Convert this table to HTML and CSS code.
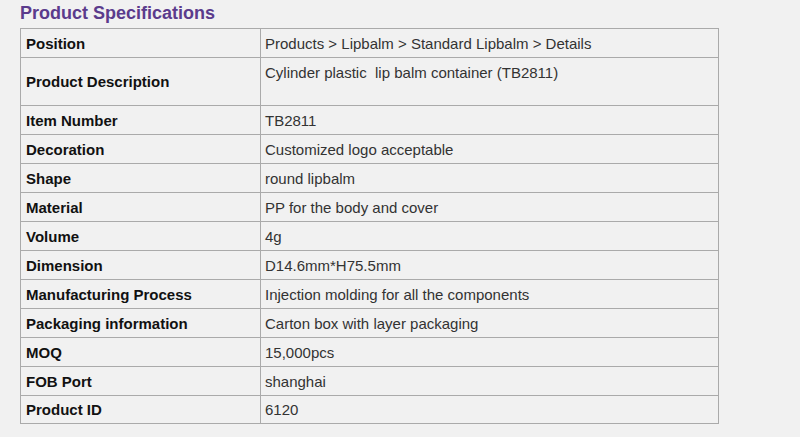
FILE: index.html
```html
<!DOCTYPE html>
<html>
<head>
<meta charset="utf-8">
<link rel="stylesheet" href="styles.css">
</head>
<body>
<div class="wrap">
  <h2 class="title">Product Specifications</h2>
  <table class="spec">
    <tr><th>Position</th><td>Products &gt; Lipbalm &gt; Standard Lipbalm &gt; Details</td></tr>
    <tr class="tall"><th>Product Description</th><td class="top">Cylinder plastic&nbsp; lip balm container (TB2811)</td></tr>
    <tr><th>Item Number</th><td>TB2811</td></tr>
    <tr><th>Decoration</th><td>Customized logo acceptable</td></tr>
    <tr><th>Shape</th><td>round lipbalm</td></tr>
    <tr><th>Material</th><td>PP for the body and cover</td></tr>
    <tr><th>Volume</th><td>4g</td></tr>
    <tr><th>Dimension</th><td>D14.6mm*H75.5mm</td></tr>
    <tr><th>Manufacturing Process</th><td>Injection molding for all the components</td></tr>
    <tr><th>Packaging information</th><td>Carton box with layer packaging</td></tr>
    <tr><th>MOQ</th><td>15,000pcs</td></tr>
    <tr><th>FOB Port</th><td>shanghai</td></tr>
    <tr class="last"><th>Product ID</th><td>6120</td></tr>
  </table>
</div>
</body>
</html>
```
FILE: styles.css
```css
html, body {
  margin: 0;
  padding: 0;
  background: #f1f1f1;
  font-family: "Liberation Sans", Arial, sans-serif;
  color: #222;
}
.wrap {
  padding: 3px 0 0 20px;
}
.title {
  margin: 0 0 4px 0;
  font-size: 18px;
  line-height: 21px;
  font-weight: bold;
  color: #5b3b8c;
}
.spec {
  border-collapse: collapse;
  width: 699px;
  font-size: 15px;
  line-height: 17px;
}
.spec th, .spec td {
  border: 1px solid #aaaaaa;
  height: 29px;
  padding: 0 5px 0 5px;
  box-sizing: border-box;
  vertical-align: middle;
  text-align: left;
}
.spec th {
  width: 240px;
  font-weight: bold;
  color: #111;
}
.spec td {
  color: #333;
  padding-left: 4px;
}
.spec tr.tall th, .spec tr.tall td {
  height: 48px;
}
.spec tr.last th, .spec tr.last td {
  height: 28px;
}
.spec td.top {
  vertical-align: top;
  padding-top: 6px;
}
```
